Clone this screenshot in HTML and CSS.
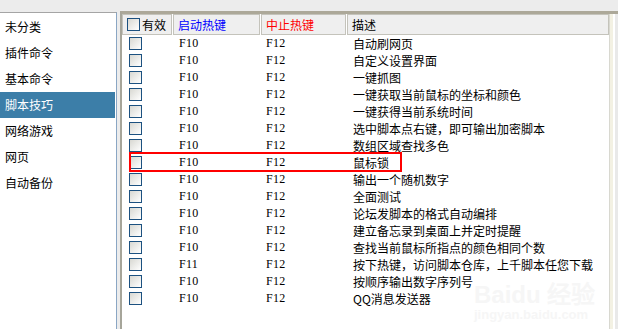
FILE: index.html
```html
<!DOCTYPE html>
<html lang="zh-CN">
<head>
    <meta charset="UTF-8">
    <title>脚本管理</title>
    <link rel="stylesheet" href="styles.css">
</head>
<body>
    <div class="topbar"></div>

    <div class="main">
        <!-- category list -->
        <ul class="categories">
            <li>未分类</li>
            <li>插件命令</li>
            <li>基本命令</li>
            <li class="selected">脚本技巧</li>
            <li>网络游戏</li>
            <li>网页</li>
            <li>自动备份</li>
        </ul>

        <div class="splitter"></div>

        <!-- script table -->
        <div class="listview">
            <div class="list-inner">
                <div class="list-head">
                    <div class="hcell"><span class="check"></span>有效</div>
                    <div class="hcell start-key">启动热键</div>
                    <div class="hcell stop-key">中止热键</div>
                    <div class="hcell">描述</div>
                </div>
                <div class="list-body">
                    <div class="row"><div class="cell"><span class="check"></span></div><div class="cell key">F10</div><div class="cell key">F12</div><div class="cell">自动刷网页</div></div>
                    <div class="row"><div class="cell"><span class="check"></span></div><div class="cell key">F10</div><div class="cell key">F12</div><div class="cell">自定义设置界面</div></div>
                    <div class="row"><div class="cell"><span class="check"></span></div><div class="cell key">F10</div><div class="cell key">F12</div><div class="cell">一键抓图</div></div>
                    <div class="row"><div class="cell"><span class="check"></span></div><div class="cell key">F10</div><div class="cell key">F12</div><div class="cell">一键获取当前鼠标的坐标和颜色</div></div>
                    <div class="row"><div class="cell"><span class="check"></span></div><div class="cell key">F10</div><div class="cell key">F12</div><div class="cell">一键获得当前系统时间</div></div>
                    <div class="row"><div class="cell"><span class="check"></span></div><div class="cell key">F10</div><div class="cell key">F12</div><div class="cell">选中脚本点右键，即可输出加密脚本</div></div>
                    <div class="row"><div class="cell"><span class="check"></span></div><div class="cell key">F10</div><div class="cell key">F12</div><div class="cell">数组区域查找多色</div></div>
                    <div class="row"><div class="cell"><span class="check"></span></div><div class="cell key">F10</div><div class="cell key">F12</div><div class="cell">鼠标锁</div></div>
                    <div class="row"><div class="cell"><span class="check"></span></div><div class="cell key">F10</div><div class="cell key">F12</div><div class="cell">输出一个随机数字</div></div>
                    <div class="row"><div class="cell"><span class="check"></span></div><div class="cell key">F10</div><div class="cell key">F12</div><div class="cell">全面测试</div></div>
                    <div class="row"><div class="cell"><span class="check"></span></div><div class="cell key">F10</div><div class="cell key">F12</div><div class="cell">论坛发脚本的格式自动编排</div></div>
                    <div class="row"><div class="cell"><span class="check"></span></div><div class="cell key">F10</div><div class="cell key">F12</div><div class="cell">建立备忘录到桌面上并定时提醒</div></div>
                    <div class="row"><div class="cell"><span class="check"></span></div><div class="cell key">F10</div><div class="cell key">F12</div><div class="cell">查找当前鼠标所指点的颜色相同个数</div></div>
                    <div class="row"><div class="cell"><span class="check"></span></div><div class="cell key">F11</div><div class="cell key">F12</div><div class="cell">按下热键，访问脚本仓库，上千脚本任您下载</div></div>
                    <div class="row"><div class="cell"><span class="check"></span></div><div class="cell key">F10</div><div class="cell key">F12</div><div class="cell">按顺序输出数字序列号</div></div>
                    <div class="row"><div class="cell"><span class="check"></span></div><div class="cell key">F10</div><div class="cell key">F12</div><div class="cell">QQ消息发送器</div></div>
                </div>
            </div>
            <div class="scrollbar"></div>

            <!-- red mark around the row in question -->
            <div class="mark"></div>

            <div class="watermark">
                <span class="wm-logo">Bai<b>du</b> 经验</span>
                <span class="wm-url">jingyan.baidu.com</span>
            </div>
        </div>
    </div>
</body>
</html>
```

FILE: styles.css
```css
body {
    margin: 0;
    padding: 0;
    background-color: #ececec;
    font-family: "Noto Sans CJK SC", "DejaVu Sans", sans-serif;
    font-size: 12px;
    color: black;
    height: 329px;
    overflow: hidden;
}
.topbar {
    height: 11px;
    background-color: #ececec;
}
.main {
    display: flex;
    height: 318px;
}
.categories {
    list-style: none;
    margin: 1px 0 0 0;
    padding: 1px 0 0 0;
    width: 116px;
    background-color: white;
    border-top: 1px solid #a5a5a5;
    border-right: 1px solid #8aa6c4;
}
.categories li {
    height: 26px;
    line-height: 26px;
    padding-left: 5px;
    font-size: 12px;
    margin-right: 1px;
}
.categories li.selected {
    background-color: #3c7ea8;
    color: white;
}
.splitter {
    width: 3px;
    background-color: #ececec;
}
.listview {
    position: relative;
    flex: 1;
    display: flex;
    background-color: white;
    border-top: 3px solid #aca899;
    border-left: 2px solid #a6a59a;
}
.list-inner {
    width: 487px;
}
.list-head {
    display: grid;
    grid-template-columns: 51px 88px 86px 262px;
    height: 21px;
    background-color: white;
}
.hcell {
    display: flex;
    align-items: center;
    box-sizing: border-box;
    padding-left: 4px;
    background-color: #efefef;
    border: 1px solid #c4c3bb;
    margin-right: 1px;
    white-space: nowrap;
}
.hcell:last-child {
    margin-right: 0;
}
.hcell .check {
    margin: 0 2px 0 0;
}
.start-key {
    color: #0000ff;
}
.stop-key {
    color: #ff0000;
}
.list-body .row {
    display: grid;
    grid-template-columns: 51px 88px 86px 262px;
    height: 17px;
}
.cell {
    display: flex;
    align-items: center;
    padding-left: 6px;
    white-space: nowrap;
}
.cell:first-child {
    padding-left: 7px;
}
.cell.key {
    font-family: "Liberation Serif", serif;
    font-size: 12px;
    letter-spacing: 0.3px;
}
.cell.key + .cell.key {
    padding-left: 5px;
}
.check {
    display: inline-block;
    width: 13px;
    height: 13px;
    box-sizing: border-box;
    border: 1px solid #1c5180;
    background: linear-gradient(135deg, #d8d8d2, #ffffff);
}
.scrollbar {
    width: 9px;
    background: linear-gradient(to right, #f3f1e3 0, #f3f1e3 3px, #ffffff 3px, #ffffff 5px, #e9e9e9 5px);
    border-left: 1px solid #d8d8d0;
    box-sizing: border-box;
}
.mark {
    position: absolute;
    left: 7px;
    top: 138px;
    width: 273px;
    height: 20px;
    border: 2px solid #ff0000;
    box-sizing: border-box;
}
.watermark {
    position: absolute;
    left: 352px;
    top: 269px;
    display: flex;
    flex-direction: column;
    color: #f6f6f6;
    font-family: "Liberation Sans", sans-serif;
}
.wm-logo {
    font-size: 24px;
    font-weight: bold;
    line-height: 24px;
}
.wm-url {
    font-size: 13px;
    font-weight: bold;
}
```
